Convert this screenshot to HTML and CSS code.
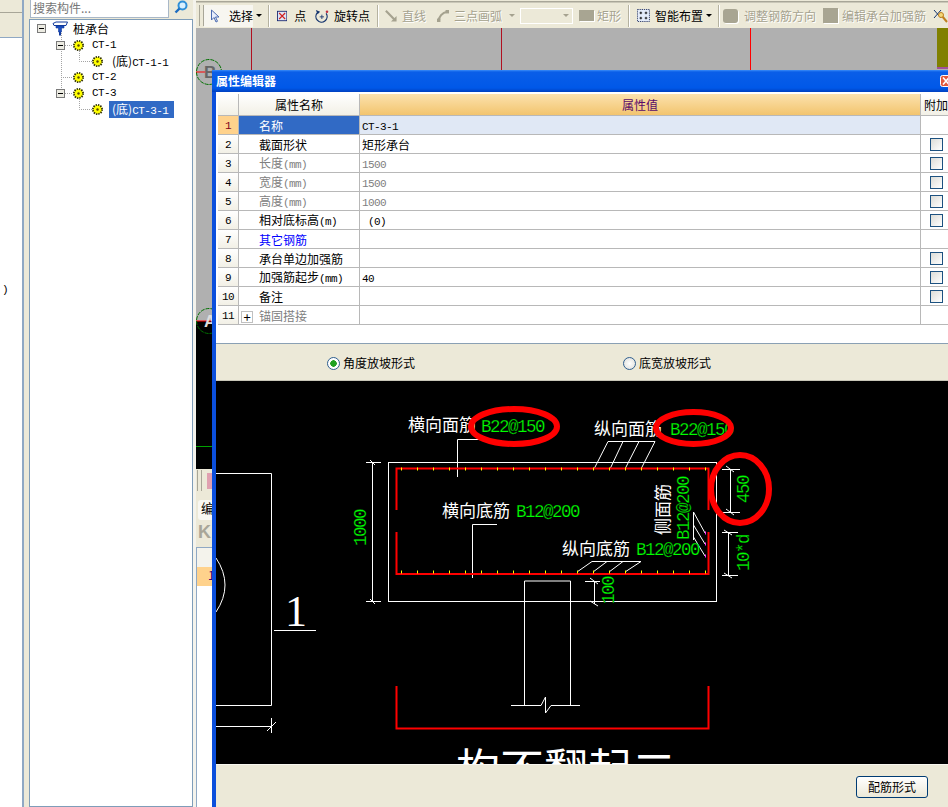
FILE: index.html
```html
<!DOCTYPE html>
<html lang="zh-CN">
<head>
    <meta charset="UTF-8">
    <title>属性编辑器</title>
    <link rel="stylesheet" href="styles.css">
</head>
<body>

<svg class="defs" width="0" height="0">
    <symbol id="gear" viewBox="0 0 11 11">
        <circle cx="5.5" cy="5.5" r="4.6" fill="#ffff00" stroke="#33330a" stroke-width="1.8" stroke-dasharray="1.4 1"/>
        <circle cx="5.5" cy="5.5" r="1.2" fill="#5a4a00"/>
    </symbol>
    <symbol id="minus" viewBox="0 0 9 9">
        <rect x=".5" y=".5" width="8" height="8" fill="#ecebe2" stroke="#7a7a7a"/>
        <path d="M2 4.5h5" stroke="#000"/>
    </symbol>
</svg>

<div class="app">

    <!-- far left panel -->
    <div class="side">
        <div class="side-box">
            <div class="side-head"></div>
            <div class="side-list"><span class="la">)</span></div>
        </div>
    </div>

    <!-- component tree -->
    <div class="tree-col">
        <div class="search">
            <div class="search-input">搜索构件...</div>
            <svg class="search-icon" width="14" height="14" viewBox="0 0 14 14">
                <circle cx="8.5" cy="5.5" r="4" fill="#d8f0ff" stroke="#2f8fd8" stroke-width="2"/>
                <path d="M5.5 8.5L1.5 12.5" stroke="#1c6cc0" stroke-width="2.4"/>
            </svg>
        </div>
        <div class="tree">
            <svg class="tree-lines" width="163" height="110" viewBox="30 19 163 110">
                <path d="M62.5 33V88M66 45.5H74M80.5 51V61.5H93M62 77.5H74M66 93.5H74M80.5 99V109.5H93" fill="none" stroke="#a4a4a4" stroke-dasharray="1 1"/>
            </svg>
            <div class="tree-row lvl0">
                <svg class="toggle"><use href="#minus"/></svg>
                <svg class="pile" width="16" height="15" viewBox="0 0 16 15">
                    <path d="M1 2.5L4 1H15.5L14 4.500H2z" fill="#fff" stroke="#123a9c"/>
                    <path d="M4 5H12V7H9.500V11H6.500V7H4z" fill="#1c4fc0" stroke="#123a9c" stroke-width=".6"/>
                    <path d="M8 11V14.500" stroke="#123a9c" stroke-width="2"/>
                </svg>
                <span class="tree-text">桩承台</span>
            </div>
            <div class="tree-row lvl1">
                <svg class="toggle"><use href="#minus"/></svg>
                <svg class="gear"><use href="#gear"/></svg>
                <span class="tree-text la">CT-1</span>
            </div>
            <div class="tree-row lvl2">
                <svg class="gear"><use href="#gear"/></svg>
                <span class="tree-text">(底)<span class="la">CT-1-1</span></span>
            </div>
            <div class="tree-row lvl1 leaf">
                <svg class="gear"><use href="#gear"/></svg>
                <span class="tree-text la">CT-2</span>
            </div>
            <div class="tree-row lvl1">
                <svg class="toggle"><use href="#minus"/></svg>
                <svg class="gear"><use href="#gear"/></svg>
                <span class="tree-text la">CT-3</span>
            </div>
            <div class="tree-row lvl2">
                <svg class="gear"><use href="#gear"/></svg>
                <span class="tree-text selected">(底)<span class="la">CT-3-1</span></span>
            </div>
        </div>
    </div>

    <div class="split"></div>

    <!-- drawing area -->
    <div class="main">
        <div class="toolbar">
            <span class="grip"></span>
            <span class="tool-btn">
                <svg width="10" height="14" viewBox="0 0 10 14"><path d="M1.500 1V11L4 8.500L6 13L7.500 12.300L5.500 8H9z" fill="#e8eefc" stroke="#4a6ab0"/></svg>
                <span>选择</span>
            </span>
            <span class="caret"></span>
            <span class="sep s1"></span>
            <svg class="t1" width="12" height="12" viewBox="0 0 12 12"><rect x=".5" y=".5" width="11" height="11" fill="#dfe6f6" stroke="#14246e"/><path d="M2.500 2.500l7 7M9.500 2.500l-7 7" stroke="#d02020" stroke-width="1.300"/></svg>
            <span class="t2">点</span>
            <svg class="t3" width="16" height="16" viewBox="0 0 16 16"><path d="M3 4A6.500 6.500 0 1 0 13 5" fill="none" stroke="#14346e" stroke-width="1.500"/><path d="M1 1L6 3L3 6z" fill="#14346e"/><path d="M8 6.500v5M5.500 9h5" stroke="#14346e"/><circle cx="14" cy="3" r="1.500" fill="#c03040"/></svg>
            <span class="t4">旋转点</span>
            <span class="sep s2"></span>
            <svg class="t5" width="14" height="14" viewBox="0 0 14 14"><path d="M1 1L11 11" stroke="#a5a28f" stroke-width="2.500"/><path d="M13.500 7V13.500H7z" fill="#a5a28f"/></svg>
            <span class="off t6">直线</span>
            <svg class="t7" width="14" height="14" viewBox="0 0 14 14"><path d="M2 13C2 8 6 3 12 2" fill="none" stroke="#a5a28f" stroke-width="2.500"/><rect x="0" y="10" width="4" height="4" fill="#a5a28f"/><rect x="10" y="0" width="4" height="4" fill="#a5a28f"/></svg>
            <span class="off t8">三点画弧</span>
            <span class="caret off-caret t9"></span>
            <span class="tool-select"><span class="caret off-caret"></span></span>
            <span class="rect-icon t10"></span>
            <span class="off t11">矩形</span>
            <span class="sep s3"></span>
            <svg class="t12" width="15" height="15" viewBox="0 0 15 15"><rect x=".5" y=".5" width="14" height="14" fill="#e4ecfa" stroke="#1c2c60" stroke-dasharray="1.500 1"/><path d="M4.500 3v3M3 4.500h3M10.500 3v3M9 4.500h3M4.500 9v3M3 10.500h3M10.500 9v3M9 10.500h3" stroke="#000"/></svg>
            <span class="t13">智能布置</span>
            <span class="caret t14"></span>
            <span class="sep s4"></span>
            <span class="rect-icon chip t15"></span>
            <span class="off t16">调整钢筋方向</span>
            <span class="rect-icon tall t17"></span>
            <span class="off t18">编辑承台加强筋</span>
            <svg class="t19" width="15" height="16" viewBox="0 0 15 16"><path d="M1 2L8 10M8 2L1 10" stroke="#14346e"/><path d="M9 8L14 14" stroke="#c08020" stroke-width="2"/><circle cx="8" cy="7" r="2.500" fill="#f4d878" stroke="#c08020"/></svg>
        </div>

        <svg class="canvas" width="752" height="441" viewBox="196 28 752 441">
            <rect x="196" y="28" width="752" height="293" fill="#b0b0b0"/>
            <rect x="196" y="321" width="752" height="148" fill="#000"/>
            <path d="M251.500 28V70M501.500 28V70" stroke="#b01020"/>
            <path d="M750.500 28V70" stroke="#f00"/>
            <rect x="937" y="28" width="11" height="39" fill="#808000"/>
            <rect x="937" y="67" width="11" height="2" fill="#a0509a"/>
            <circle cx="209" cy="72" r="12.500" fill="none" stroke="#007000" stroke-dasharray="4 1"/>
            <path d="M196 72H216" stroke="#f00"/>
            <text class="axis" x="204" y="78" fill="#666">B</text>
            <path d="M196 321H216" stroke="#f00"/>
            <circle cx="209" cy="321" r="12.500" fill="none" stroke="#007000" stroke-dasharray="4 1"/>
            <text class="axis" x="204" y="327" fill="#ddd">A</text>
            <path d="M196 446.500H216" stroke="#00a000"/>
        </svg>

        <div class="lower">
            <div class="lower-bar">
                <span class="grip"></span>
                <span class="pink"></span>
            </div>
            <div class="lower-tabs">
                <span class="lower-tab">编辑</span>
                <span class="lower-k">K</span>
            </div>
            <div class="lower-grid">
                <div class="lower-head"></div>
                <div class="lower-row">1</div>
            </div>
        </div>
    </div>

    <!-- property dialog -->
    <div class="dialog">
        <div class="dlg-title">
            <span>属性编辑器</span>
            <svg class="dlg-close" width="21" height="12" viewBox="0 0 21 12">
                <rect x=".5" y=".5" width="20" height="11" rx="2" fill="#e2583c" stroke="#fff"/>
                <path d="M3 2.500L9 9.500M9 2.500L3 9.500" stroke="#fff" stroke-width="1.600"/>
            </svg>
        </div>
        <div class="dlg-body">
            <div class="props">
                <table class="prop-table">
                    <colgroup>
                        <col class="c-num"><col class="c-name"><col class="c-val"><col class="c-add">
                    </colgroup>
                    <tr class="head">
                        <th class="num"></th>
                        <th>属性名称</th>
                        <th class="val-head">属性值</th>
                        <th class="add-head">附加</th>
                    </tr>
                    <tr class="sel">
                        <td class="num">1</td><td class="name">名称</td><td class="val"><span class="la">CT-3-1</span></td><td></td>
                    </tr>
                    <tr>
                        <td class="num">2</td><td class="name">截面形状</td><td class="val">矩形承台</td><td><span class="check"></span></td>
                    </tr>
                    <tr class="dim">
                        <td class="num">3</td><td class="name">长度<span class="la">(mm)</span></td><td class="val"><span class="la">1500</span></td><td><span class="check"></span></td>
                    </tr>
                    <tr class="dim">
                        <td class="num">4</td><td class="name">宽度<span class="la">(mm)</span></td><td class="val"><span class="la">1500</span></td><td><span class="check"></span></td>
                    </tr>
                    <tr class="dim">
                        <td class="num">5</td><td class="name">高度<span class="la">(mm)</span></td><td class="val"><span class="la">1000</span></td><td><span class="check"></span></td>
                    </tr>
                    <tr>
                        <td class="num">6</td><td class="name">相对底标高<span class="la">(m)</span></td><td class="val"><span class="la">&nbsp;(0)</span></td><td><span class="check"></span></td>
                    </tr>
                    <tr>
                        <td class="num">7</td><td class="name link">其它钢筋</td><td class="val"></td><td></td>
                    </tr>
                    <tr>
                        <td class="num">8</td><td class="name">承台单边加强筋</td><td class="val"></td><td><span class="check"></span></td>
                    </tr>
                    <tr>
                        <td class="num">9</td><td class="name">加强筋起步<span class="la">(mm)</span></td><td class="val"><span class="la">40</span></td><td><span class="check"></span></td>
                    </tr>
                    <tr>
                        <td class="num">10</td><td class="name">备注</td><td class="val"></td><td><span class="check"></span></td>
                    </tr>
                    <tr class="dim">
                        <td class="num">11</td><td class="name"><span class="plus">+</span>锚固搭接</td><td class="val"></td><td></td>
                    </tr>
                </table>
            </div>

            <div class="radios">
                <label class="radio first"><span class="dot on"></span>角度放坡形式</label>
                <label class="radio"><span class="dot"></span>底宽放坡形式</label>
            </div>

            <svg class="drawing" width="732" height="383" viewBox="216 381 732 383">
                <!-- outlines -->
                <g fill="none" stroke="#fff">
                    <rect x="388.500" y="462.500" width="328" height="139"/>
                    <path d="M216 473.500H271.500V705.500H216"/>
                    <path d="M216 558Q234 585 216 612"/>
                    <path d="M274 630.500H316"/>
                    <path d="M216 726.500H271M271.500 718V733M267 731L276 722"/>
                    <path d="M372.500 462V601M366 462.500H381M366 601.500H381M370 460L375 465M370 599L375 604"/>
                    <path d="M524.500 581V705M570.500 581V705M511 705.500H541L545.500 697V713L551 705.500H580M524.500 581H570.500"/>
                    <path d="M457.500 477V439.500H480"/>
                    <path d="M608 441.500H655M608 441.500L594 469M623 441.500L610 469M639 441.500L625 469M655 441.500L641 469"/>
                    <path d="M472.500 578V524.500H497"/>
                    <path d="M592 561.500H641M592 561.500L577 572M607 561.500L593 572M623 561.500L609 572M641 561.500L625 572"/>
                    <path d="M693.500 512V540M693.500 512L705 533M693.500 525L705 544M693.500 537L705 556"/>
                    <path d="M730.500 469V512M722 469.500H740M722 512.500H740M726 466L734 472M726 509L734 515"/>
                    <path d="M728.500 532V575M722 532.500H738M722 575.500H738M724 530L732 535M724 573L732 578"/>
                    <path d="M594.500 581V604M585 581.500H600M590 578L598 584M590 601L598 606"/>
                </g>
                <!-- rebar -->
                <g fill="none" stroke="#f00" stroke-width="2">
                    <path d="M396.500 510V468.500H708.500V510"/>
                    <path d="M396.500 532V574H708.500V532"/>
                    <path d="M396.500 686V728.500H708.500V686"/>
                </g>
                <path class="rebar-dots" d="M401 469h1M417 469h1M433 469h1M449 469h1M465 469h1M481 469h1M497 469h1M513 469h1M529 469h1M545 469h1M561 469h1M577 469h1M593 469h1M609 469h1M625 469h1M641 469h1M657 469h1M673 469h1M689 469h1M705 469h1M401 572h1M417 572h1M433 572h1M449 572h1M465 572h1M481 572h1M497 572h1M513 572h1M529 572h1M545 572h1M561 572h1M577 572h1M593 572h1M609 572h1M625 572h1M641 572h1M657 572h1M673 572h1M689 572h1M705 572h1"/>
                <path class="side-dots" d="M705 533h1M705 544h1M705 556h1"/>
                <!-- labels -->
                <text class="cn" x="408" y="431">横向面筋</text>
                <text class="cn" x="594" y="435">纵向面筋</text>
                <text class="cn" x="442" y="517">横向底筋</text>
                <text class="cn" x="562" y="555">纵向底筋</text>
                <text class="cn" transform="translate(669 535) rotate(-90)">侧面筋</text>
                <text class="big-one" x="285" y="626">1</text>
                <text class="big-cn" x="456" y="786">构不翻起二</text>
                <text class="gr" x="481" y="432">B22@150</text>
                <text class="gr" x="670" y="435">B22@150</text>
                <text class="gr" x="516" y="517">B12@200</text>
                <text class="gr" x="636" y="555">B12@200</text>
                <text class="gr" transform="translate(689 540) rotate(-90)">B12@200</text>
                <text class="gr" transform="translate(749 503) rotate(-90)">450</text>
                <text class="gr" transform="translate(749 571) rotate(-90)">10*d</text>
                <text class="gr" transform="translate(366 546) rotate(-90)">1000</text>
                <text class="gr" transform="translate(614 604) rotate(-90)">100</text>
                <!-- hand drawn marks -->
                <g fill="none" stroke="#f00" stroke-width="6">
                    <ellipse cx="514" cy="426.500" rx="43" ry="17.500"/>
                    <ellipse cx="693.500" cy="428" rx="37.500" ry="16"/>
                    <ellipse cx="740" cy="489" rx="29" ry="34"/>
                </g>
            </svg>

            <div class="dlg-foot">
                <button class="foot-btn">配筋形式</button>
            </div>
        </div>
    </div>

</div>

</body>
</html>
```

FILE: styles.css
```css
* {
    box-sizing: border-box;
}

body {
    margin: 0;
    background: #ece9d8;
    color: #000;
    font-family: "Noto Sans CJK SC", "Liberation Sans", sans-serif;
    font-size: 12px;
    line-height: 16px;
}

.defs {
    position: absolute;
}

.app {
    position: relative;
    display: flex;
    width: 948px;
    height: 807px;
    overflow: hidden;
}

.la {
    font-family: "Liberation Mono", monospace;
    font-size: 11px;
    letter-spacing: -0.6px;
    line-height: 14px;
}

/* left panels */
.side {
    width: 29px;
    flex: none;
}

.side-box {
    width: 24px;
    height: 100%;
    display: flex;
    flex-direction: column;
    border-right: 2px solid #8fa8c4;
}

.side-head {
    height: 38px;
    background: linear-gradient(#ece9d8 12px, #a8a698 12px, #a8a698 13px, #ece9d8 13px);
    border-bottom: 1px solid #8fa8c4;
}

.side-list {
    flex: 1;
    background: #fff;
    padding: 242px 0 0 2px;
}

.tree-col {
    width: 164px;
    flex: none;
    display: flex;
    flex-direction: column;
}

.search {
    height: 19px;
    flex: none;
    display: flex;
    align-items: flex-start;
}

.search-input {
    width: 139px;
    height: 18px;
    margin-left: 1px;
    border: 1px solid #a9b8c8;
    border-top: 0;
    background: #fff;
    color: #777;
    padding-left: 2px;
    line-height: 15px;
}

.search-icon {
    margin: 0 0 0 5px;
}

.tree {
    position: relative;
    flex: 1;
    border: 1px solid #7f9db9;
    background: #fff;
}

.tree-lines {
    position: absolute;
    left: -1px;
    top: -1px;
}

.tree-row {
    position: relative;
    display: flex;
    align-items: center;
    height: 16px;
}

.tree-row.lvl0 {
    height: 17px;
}

.toggle {
    width: 9px;
    height: 9px;
    flex: none;
}

.gear {
    width: 11px;
    height: 11px;
    flex: none;
}

.lvl0 {
    padding-left: 7px;
}

.lvl0 .pile {
    margin-left: 6px;
}

.lvl0 .tree-text {
    margin-left: 5px;
}

.lvl1 {
    padding-left: 26px;
}

.lvl1 .gear {
    margin-left: 8px;
}

.lvl1.leaf {
    padding-left: 43px;
}

.lvl1.leaf .gear {
    margin-left: 0;
}

.lvl1 .tree-text {
    margin-left: 8px;
}

.lvl2 {
    padding-left: 62px;
}

.lvl2 .tree-text {
    margin-left: 6px;
    padding: 0 6px 0 3px;
}

.selected {
    background: #316ac5;
    color: #fff;
}

.split {
    width: 3px;
    flex: none;
    background: #f4f3ec;
}

/* toolbar */
.main {
    width: 752px;
    flex: none;
    display: flex;
    flex-direction: column;
}

.toolbar {
    height: 28px;
    flex: none;
    display: flex;
    align-items: center;
    padding-top: 3px;
    white-space: nowrap;
    background: linear-gradient(#ece9d8 1px, #a8a698 1px, #a8a698 2px, #ece9d8 3px);
}

.grip {
    width: 5px;
    height: 21px;
    margin-left: 3px;
    flex: none;
    border-left: 1px solid #a8a698;
    border-right: 1px solid #a8a698;
}

.tool-btn {
    display: flex;
    align-items: center;
    gap: 9px;
    width: 50px;
    height: 22px;
    padding-left: 6px;
    background: #f7f6f0;
}

.caret {
    width: 0;
    height: 0;
    flex: none;
    margin-left: 3px;
    border-left: 3px solid transparent;
    border-right: 3px solid transparent;
    border-top: 3px solid #000;
}

.off-caret {
    border-top-color: #a5a28f;
}

.sep {
    width: 2px;
    height: 22px;
    flex: none;
    background: linear-gradient(to right, #b5b2a0 1px, #fff 1px);
}

.off {
    color: #a5a28f;
    text-shadow: 1px 1px 0 #fff;
}

.rect-icon {
    width: 15px;
    height: 11px;
    flex: none;
    background: #a8a592;
    box-shadow: 1px 1px 0 #fff;
}

.rect-icon.chip {
    height: 14px;
    border-radius: 3px;
}

.rect-icon.tall {
    height: 15px;
}

.s1 { margin-left: 6px; }
.t1 { margin-left: 7px; }
.t2 { margin-left: 7px; }
.t3 { margin-left: 9px; }
.t4 { margin-left: 5px; }
.s2 { margin-left: 7px; }
.t5 { margin-left: 6px; }
.t6 { margin-left: 5px; }
.t7 { margin-left: 11px; }
.t8 { margin-left: 5px; }
.t9 { margin-left: 7px; }
.t10 { margin-left: 6px; }
.t11 { margin-left: 3px; }
.s3 { margin-left: 7px; }
.t12 { margin-left: 7px; }
.t13 { margin-left: 5px; }
.t14 { margin-left: 3px; }
.s4 { margin-left: 6px; }
.t15 { margin-left: 3px; }
.t16 { margin-left: 6px; }
.t17 { margin-left: 7px; }
.t18 { margin-left: 4px; }
.t19 { margin-left: 7px; flex: none; }

.tool-select {
    width: 53px;
    height: 16px;
    margin-left: 5px;
    flex: none;
    display: flex;
    align-items: center;
    justify-content: flex-end;
    padding-right: 3px;
    border: 1px solid #fff;
}

/* drawing behind the dialog */
.canvas {
    display: block;
    flex: none;
}

.axis {
    font-family: "Liberation Sans", sans-serif;
    font-size: 17px;
    font-weight: bold;
}

.lower {
    flex: 1;
    display: flex;
    flex-direction: column;
}

.lower-bar {
    height: 23px;
    flex: none;
    display: flex;
    align-items: center;
}

.lower-bar .grip {
    margin-left: 1px;
}

.pink {
    width: 8px;
    height: 16px;
    margin-left: 5px;
    background: #e0a0b0;
}

.lower-tabs {
    height: 55px;
    flex: none;
    padding: 8px 0 0 2px;
    overflow: hidden;
    white-space: nowrap;
}

.lower-tab {
    display: block;
    width: 40px;
    height: 20px;
    padding-left: 3px;
    background: #f8f7f2;
    border-radius: 3px;
    font-size: 13px;
}

.lower-k {
    display: block;
    margin-top: 4px;
    color: #a8a698;
    font-family: "Liberation Sans", sans-serif;
    font-size: 18px;
    font-weight: bold;
}

.lower-grid {
    flex: 1;
    border-top: 1px solid #8fa8c4;
    border-left: 1px solid #8fa8c4;
    background: #fff;
}

.lower-head {
    height: 19px;
    background: #f4f3ec;
}

.lower-row {
    height: 19px;
    padding-left: 11px;
    background: #ffd28c;
    color: #400070;
}

/* property dialog */
.dialog {
    position: absolute;
    left: 212px;
    top: 70px;
    right: 0;
    bottom: 0;
    display: flex;
    flex-direction: column;
}

.dlg-title {
    height: 22px;
    flex: none;
    display: flex;
    align-items: center;
    justify-content: space-between;
    padding-left: 4px;
    background: linear-gradient(#3a8cf8, #0a5ee8 2px, #0058e8 18px, #0040c0);
    color: #fff;
    font-weight: bold;
    font-size: 12px;
    overflow: hidden;
}

.dlg-close {
    margin-right: -13px;
    flex: none;
}

.dlg-body {
    flex: 1;
    display: flex;
    flex-direction: column;
    border-left: 4px solid #0b4fdc;
}

.props {
    height: 252px;
    flex: none;
    padding: 2px 0 0 2px;
    background: #fff;
    border-bottom: 1px solid #8aa0b4;
    overflow: hidden;
}

.prop-table {
    width: 731px;
    table-layout: fixed;
    border-collapse: separate;
    border-spacing: 0;
}

.c-num { width: 21px; }
.c-name { width: 121px; }
.c-val { width: 561px; }
.c-add { width: 28px; }

.prop-table th,
.prop-table td {
    height: 19px;
    padding: 1px 0 0;
    border-right: 1px solid #b8b8b8;
    border-bottom: 1px solid #b8b8b8;
    font-weight: normal;
    line-height: 14px;
    white-space: nowrap;
    overflow: hidden;
}

.prop-table .head th {
    height: 22px;
    background: linear-gradient(#fff, #f2f0e6);
    text-align: center;
}

.prop-table .head .val-head {
    background: linear-gradient(#fce2ae, #f2c46e);
    color: #5a0a6a;
}

.prop-table .head .add-head {
    text-align: left;
    padding-left: 3px;
}

.prop-table .num {
    text-align: center;
    background: linear-gradient(#fff, #f2f0e6);
    font-family: "Liberation Mono", monospace;
    font-size: 11px;
    letter-spacing: -0.6px;
}

.prop-table .name {
    padding-left: 20px;
}

.prop-table .val {
    padding-left: 2px;
}

.prop-table .sel .num {
    background: #ffd28c;
    color: #800020;
}

.sel .name {
    background: #316ac5;
    color: #fff;
}

.sel .val {
    background: #e0e8f5;
}

.dim .name,
.dim .val {
    color: #808080;
}

.link {
    color: #0000ff;
}

.plus {
    display: inline-block;
    width: 12px;
    height: 12px;
    margin: 0 6px 0 -18px;
    border: 1px solid #c0c0c0;
    color: #000;
    font-size: 13px;
    line-height: 9px;
    text-align: center;
    vertical-align: -1px;
}

.check {
    display: block;
    width: 13px;
    height: 13px;
    margin-left: 9px;
    border: 1px solid #1c5180;
    background: linear-gradient(135deg, #dcdcd7, #fff);
}

.radios {
    height: 37px;
    flex: none;
    display: flex;
    align-items: center;
    padding-top: 2px;
    background: #ece9d8;
    border-bottom: 1px solid #c8c6b8;
}

.radio {
    display: flex;
    align-items: center;
    gap: 3px;
}

.radio.first {
    margin-left: 111px;
    margin-right: 208px;
}

.dot {
    width: 13px;
    height: 13px;
    border: 1px solid #2f5f90;
    border-radius: 50%;
    background: radial-gradient(circle, #fff, #dcdcd7);
}

.dot.on {
    background: radial-gradient(circle, #21a121 0, #21a121 3px, #fff 3.500px);
}

.drawing {
    display: block;
    flex: none;
    background: #000;
}

.rebar-dots {
    stroke: #ffff00;
    stroke-width: 3;
}

.side-dots {
    stroke: #ff30ff;
    stroke-width: 3;
}

.cn {
    fill: #fff;
    font-size: 17px;
}

/* thin black stroke on top of the fill keeps the CAD text light */
.gr {
    fill: #00ff00;
    stroke: #000;
    stroke-width: 0.25px;
    font-family: "Liberation Mono", monospace;
    font-size: 17.5px;
    letter-spacing: -1.500px;
}

.big-one {
    fill: #fff;
    font-family: "Liberation Serif", serif;
    font-size: 44px;
}

.big-cn {
    fill: #fff;
    font-size: 44px;
}

.dlg-foot {
    flex: 1;
    display: flex;
    justify-content: flex-end;
    align-items: flex-start;
    padding: 11px 20px 0 0;
    background: #ece9d8;
    border-top: 1px solid #f8f7f0;
}

.foot-btn {
    width: 72px;
    height: 22px;
    padding: 0;
    border: 1px solid #003c74;
    border-radius: 3px;
    background: linear-gradient(#fff, #ece9d8);
    font-family: inherit;
    font-size: 12px;
    line-height: 18px;
}
```
